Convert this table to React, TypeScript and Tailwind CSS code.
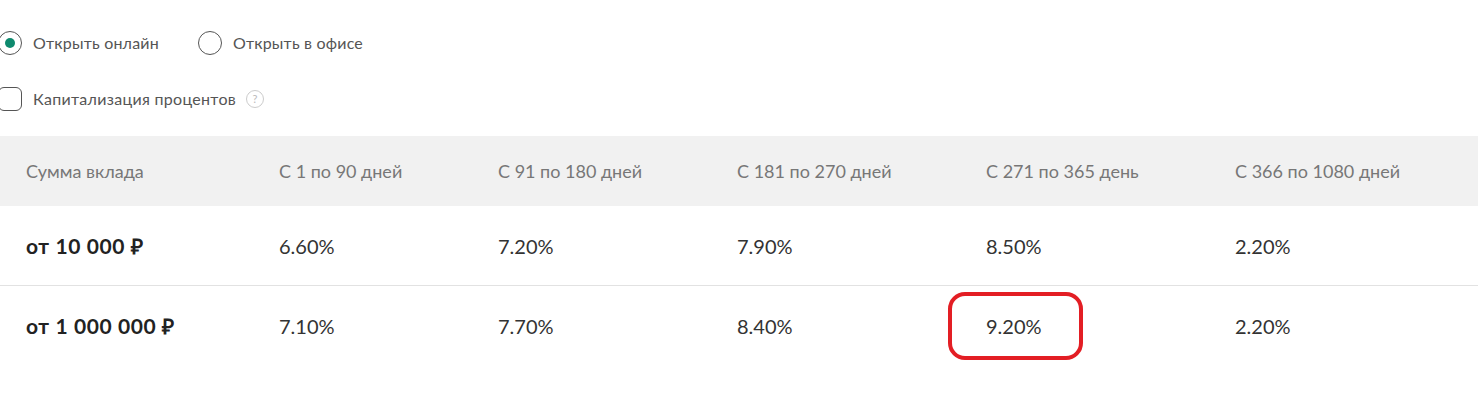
import React from "react"

const headers = ["Сумма вклада", "С 1 по 90 дней", "С 91 по 180 дней", "С 181 по 270 дней", "С 271 по 365 день", "С 366 по 1080 дней"]

const rows = [
  { label: "от 10 000 ₽", values: ["6.60%", "7.20%", "7.90%", "8.50%", "2.20%"] },
  { label: "от 1 000 000 ₽", values: ["7.10%", "7.70%", "8.40%", "9.20%", "2.20%"] },
]

// column widths taken from the reference
const cols = ["w-[279px]", "w-[219px]", "w-[239px]", "w-[249px]", "w-[249px]", "w-[243px]"]

export default function App() {
  return (
    <div className="w-[1481px] h-[418px] bg-white overflow-hidden text-[#333] font-['Lato','Liberation_Sans',sans-serif]">
      <div className="-ml-[2px] pt-[31px]">
        {/* Open options */}
        <div className="flex items-center h-[24px]">
          <label className="flex items-center gap-[11px]">
            <span className="w-[24px] h-[24px] rounded-full border border-[#555] flex items-center justify-center">
              <span className="w-[10px] h-[10px] rounded-full bg-[#0e8a6e]" />
            </span>
            <span className="text-[16px] tracking-[0.2px] text-[#555]">Открыть онлайн</span>
          </label>
          <label className="flex items-center gap-[11px] ml-[39px]">
            <span className="w-[24px] h-[24px] rounded-full border border-[#555]" />
            <span className="text-[16px] tracking-[0.2px] text-[#555]">Открыть в офисе</span>
          </label>
        </div>

        {/* Capitalization */}
        <div className="flex items-center h-[24px] mt-[32px]">
          <span className="w-[24px] h-[24px] rounded-[6px] border border-[#555]" />
          <span className="ml-[11px] text-[16px] tracking-[0.3px] text-[#555]">Капитализация процентов</span>
          <span className="ml-[10px] w-[18px] h-[18px] rounded-full border border-[#ccc] text-[#bbb] text-[11px] flex items-center justify-center">?</span>
        </div>
      </div>

      {/* Rates table */}
      <div className="mt-[25px] w-[1478px]">
        <div className="flex items-center h-[70px] bg-[#f1f1f1] text-[18px] text-[#777]">
          {headers.map((h, i) => (
            <div key={h} className={`${cols[i]} ${i === 0 ? "pl-[26px]" : ""}`}>{h}</div>
          ))}
        </div>
        {rows.map((r, ri) => (
          <div key={r.label} className={`flex items-center h-[80px] ${ri === 0 ? "border-b border-[#e2e2e2]" : ""}`}>
            <div className={`${cols[0]} pl-[26px] text-[21px] tracking-[0.6px] font-bold text-[#222]`}>{r.label}</div>
            {r.values.map((v, i) => (
              <div key={i} className={`${cols[i + 1]} text-[20px] text-[#333]`}>
                {ri === 1 && i === 3 ? (
                  <span className="-ml-[38px] inline-flex items-center w-[135px] h-[68px] pl-[34px] border-4 border-[#e31e24] rounded-[17px]">{v}</span>
                ) : (
                  v
                )}
              </div>
            ))}
          </div>
        ))}
      </div>
    </div>
  )
}
